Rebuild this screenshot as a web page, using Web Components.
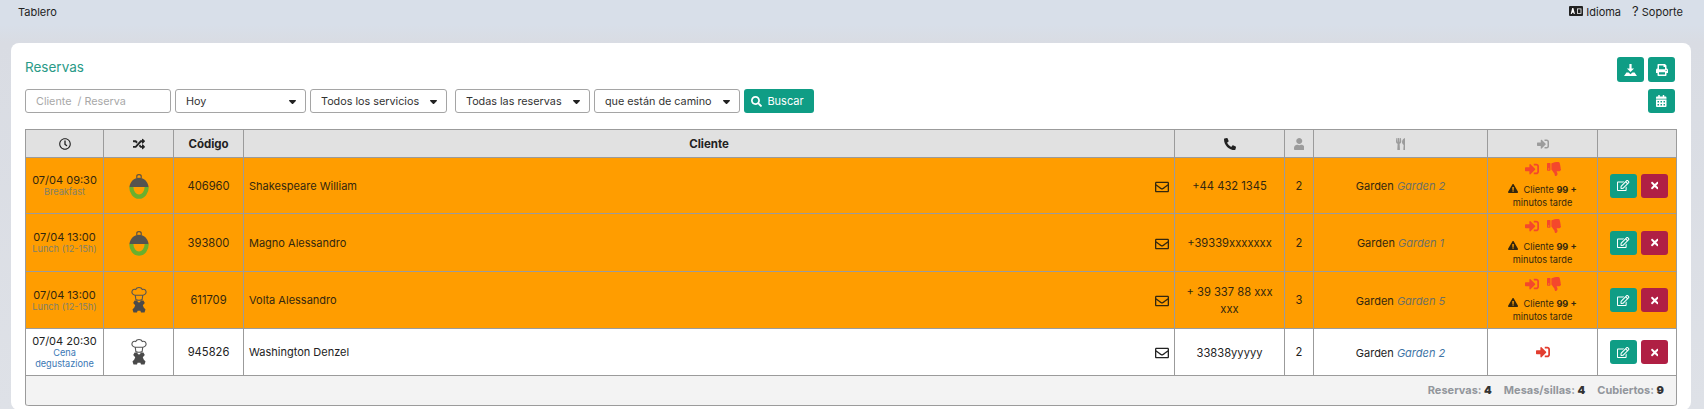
<!DOCTYPE html>
<html lang="es">
<head>
<meta charset="utf-8">
<title>Reservas</title>
<style>
    html, body { margin: 0; height: 409px; overflow: hidden; }
    body {
        background: linear-gradient(#d8dfe9 0, #d8dfe9 25px, #d9dce3 43px, #dee1e7 100%);
        font: 11px Inter, "Liberation Sans", sans-serif;
        color: #222;
    }
</style>
</head>
<body>
<top-bar>
    <span slot="left">Tablero</span>
    <span slot="right"><app-icon name="language"></app-icon>&nbsp;Idioma</span>
    <span slot="right"><span style="font-size:13px;line-height:0">?</span>&nbsp;Soporte</span>
</top-bar>
<res-card heading="Reservas">
    <tool-button slot="actions" icon="download"></tool-button>
    <tool-button slot="actions" icon="print"></tool-button>

    <filter-input slot="filters" style="width:146px" placeholder="Cliente&nbsp; / Reserva"></filter-input>
    <filter-select slot="filters" style="width:131px">Hoy</filter-select>
    <filter-select slot="filters" style="width:137px;margin-right:4px">Todos los servicios</filter-select>
    <filter-select slot="filters" style="width:135px">Todas las reservas</filter-select>
    <filter-select slot="filters" style="width:146px">que están de camino</filter-select>
    <tool-button slot="filters" icon="search" size="11" label="Buscar" style="width:70px;height:24px;padding-right:3px"></tool-button>
    <tool-button slot="calendar" icon="calendar" style="height:24px"></tool-button>

    <res-table reservas="4" mesas="4" cubiertos="9">
        <res-row late height="56" time="07/04 09:30" service="Breakfast" kind="cloche" code="406960" name="Shakespeare William" phone="+44 432 1345" pax="2" table="Garden 2"></res-row>
        <res-row late height="58" time="07/04 13:00" service="Lunch (12-15h)" kind="cloche" code="393800" name="Magno Alessandro" phone="+39339xxxxxxx" pax="2" table="Garden 1"></res-row>
        <res-row late height="57" time="07/04 13:00" service="Lunch (12-15h)" kind="chef" code="611709" name="Volta Alessandro" phone="+ 39 337 88 xxx xxx" pax="3" table="Garden 5"></res-row>
        <res-row height="47" time="07/04 20:30" service="Cena degustazione" kind="chef" code="945826" name="Washington Denzel" phone="33838yyyyy" pax="2" table="Garden 2"></res-row>
    </res-table>
</res-card>

<script>
    const ICONS = {
        print: ['0 0 512 512', 'M448 192V77.250c0-8.490-3.370-16.620-9.370-22.620L393.370 9.370c-6-6-14.140-9.370-22.630-9.370H96C78.330 0 64 14.330 64 32v160c-35.350 0-64 28.650-64 64v112c0 8.840 7.160 16 16 16h48v96c0 17.670 14.330 32 32 32h320c17.670 0 32-14.330 32-32v-96h48c8.840 0 16-7.160 16-16V256c0-35.350-28.650-64-64-64zm-64 256H128v-96h256v96zm0-224H128V64h192v48c0 8.840 7.160 16 16 16h48v96zm48 72c-13.250 0-24-10.750-24-24 0-13.260 10.750-24 24-24s24 10.740 24 24c0 13.250-10.750 24-24 24z'],
        calendar: ['0 0 448 512', 'M0 464c0 26.500 21.500 48 48 48h352c26.500 0 48-21.500 48-48V192H0v272zm320-196c0-6.600 5.400-12 12-12h40c6.600 0 12 5.400 12 12v40c0 6.600-5.400 12-12 12h-40c-6.600 0-12-5.400-12-12v-40zm0 128c0-6.600 5.400-12 12-12h40c6.600 0 12 5.400 12 12v40c0 6.600-5.400 12-12 12h-40c-6.600 0-12-5.400-12-12v-40zM192 268c0-6.600 5.400-12 12-12h40c6.600 0 12 5.400 12 12v40c0 6.600-5.400 12-12 12h-40c-6.600 0-12-5.400-12-12v-40zm0 128c0-6.600 5.400-12 12-12h40c6.600 0 12 5.400 12 12v40c0 6.600-5.400 12-12 12h-40c-6.600 0-12-5.400-12-12v-40zM64 268c0-6.600 5.400-12 12-12h40c6.600 0 12 5.400 12 12v40c0 6.600-5.400 12-12 12H76c-6.600 0-12-5.400-12-12v-40zm0 128c0-6.600 5.400-12 12-12h40c6.600 0 12 5.400 12 12v40c0 6.600-5.400 12-12 12H76c-6.600 0-12-5.400-12-12v-40zM400 64h-48V16c0-8.800-7.200-16-16-16h-32c-8.800 0-16 7.200-16 16v48H160V16c0-8.800-7.200-16-16-16h-32c-8.800 0-16 7.200-16 16v48H48C21.500 64 0 85.500 0 112v48h448v-48c0-26.500-21.500-48-48-48z'],
        search: ['0 0 512 512', 'M505 442.700L405.300 343c-4.500-4.500-10.600-7-17-7H372c27.600-35.300 44-79.700 44-128C416 93.100 322.900 0 208 0S0 93.100 0 208s93.100 208 208 208c48.300 0 92.700-16.400 128-44v16.300c0 6.400 2.500 12.500 7 17l99.700 99.700c9.400 9.400 24.600 9.400 33.900 0l28.300-28.300c9.400-9.400 9.400-24.600.1-34zM208 336c-70.700 0-128-57.200-128-128 0-70.700 57.200-128 128-128 70.700 0 128 57.200 128 128 0 70.700-57.200 128-128 128z'],
        clock: ['0 0 512 512', 'M256 8C119 8 8 119 8 256s111 248 248 248 248-111 248-248S393 8 256 8zm0 448c-110.500 0-200-89.500-200-200S145.500 56 256 56s200 89.500 200 200-89.500 200-200 200zm61.800-104.400l-84.900-61.700c-3.100-2.300-4.900-5.900-4.900-9.700V116c0-6.600 5.400-12 12-12h32c6.600 0 12 5.400 12 12v141.700l66.800 48.600c5.400 3.900 6.500 11.400 2.600 16.800L334.600 349c-3.900 5.300-11.400 6.500-16.800 2.600z'],
        random: ['0 0 512 512', 'M504.971 359.029c9.373 9.373 9.373 24.569 0 33.941l-80 79.984c-15.010 15.010-40.971 4.490-40.971-16.971V416h-58.785a12.004 12.004 0 0 1-8.773-3.812l-70.556-75.596 53.333-57.143L352 336h32v-39.981c0-21.438 25.943-31.998 40.971-16.971l80 79.981zM12 176h84l52.781 56.551 53.333-57.143-70.556-75.596A11.999 11.999 0 0 0 122.785 96H12c-6.627 0-12 5.373-12 12v56c0 6.627 5.373 12 12 12zm372 0v39.984c0 21.460 25.961 31.980 40.971 16.971l80-79.984c9.373-9.373 9.373-24.569 0-33.941l-80-79.981C409.943 24.021 384 34.582 384 56.019V96h-58.785a12.004 12.004 0 0 0-8.773 3.812L96 336H12c-6.627 0-12 5.373-12 12v56c0 6.627 5.373 12 12 12h110.785c3.326 0 6.503-1.381 8.773-3.812L352 176h32z'],
        phone: ['0 0 512 512', 'M497.390 361.800l-112-48a24 24 0 0 0-28 6.900l-49.600 60.600A370.660 370.660 0 0 1 130.600 204.110l60.600-49.600a23.940 23.940 0 0 0 6.900-28l-48-112A24.160 24.160 0 0 0 122.600.610l-104 24A24 24 0 0 0 0 48c0 256.500 207.900 464 464 464a24 24 0 0 0 23.400-18.600l24-104a24.290 24.290 0 0 0-14.010-27.600z'],
        user: ['0 0 448 512', 'M224 256c70.700 0 128-57.300 128-128S294.700 0 224 0 96 57.300 96 128s57.300 128 128 128zm89.600 32h-16.700c-22.200 10.200-46.900 16-72.900 16s-50.600-5.800-72.900-16h-16.700C60.200 288 0 348.200 0 422.400V464c0 26.500 21.500 48 48 48h352c26.500 0 48-21.500 48-48v-41.600c0-74.200-60.200-134.400-134.400-134.400z'],
        utensils: ['0 0 416 512', 'M207.900 15.200c.8 4.700 16.100 94.500 16.100 128.800 0 52.300-27.800 89.600-68.900 104.600L168 486.700c.7 13.700-10.200 25.300-24 25.300H80c-13.700 0-24.700-11.500-24-25.300l12.900-238.100C27.700 233.600 0 196.200 0 144 0 109.600 15.300 19.900 16.100 15.200 19.300-5.100 61.400-5.400 64 16.300v141.200c1.300 3.400 15.100 3.200 16 0 1.400-25.300 7.900-139.200 8-141.800 3.300-20.800 44.700-20.800 47.900 0 .2 2.700 6.600 116.500 8 141.800.9 3.200 14.800 3.400 16 0V16.300c2.600-21.600 44.800-21.400 48-1.100zm119.200 285.700l-15 185.100c-1.200 14 9.900 26 23.900 26h56c13.300 0 24-10.700 24-24V24c0-13.200-10.700-24-24-24-82.500 0-221.400 178.500-64.900 300.900z'],
        signin: ['0 0 512 512', 'M416 448h-84c-6.600 0-12-5.400-12-12v-40c0-6.600 5.400-12 12-12h84c17.700 0 32-14.300 32-32V160c0-17.700-14.300-32-32-32h-84c-6.600 0-12-5.400-12-12V76c0-6.600 5.400-12 12-12h84c53 0 96 43 96 96v192c0 53-43 96-96 96zm-47-201L201 79c-15-15-41-4.500-41 17v96H24c-13.300 0-24 10.700-24 24v96c0 13.300 10.700 24 24 24h136v96c0 21.500 26 32 41 17l168-168c9.300-9.400 9.300-24.600 0-34z'],
        thumbsdown: ['0 0 512 512', 'M0 56v240c0 13.255 10.745 24 24 24h80c13.255 0 24-10.745 24-24V56c0-13.255-10.745-24-24-24H24C10.745 32 0 42.745 0 56zm40 200c0-13.255 10.745-24 24-24s24 10.745 24 24-10.745 24-24 24-24-10.745-24-24zm272 256c-20.183 0-29.485-39.293-33.931-57.795-5.206-21.666-10.589-44.070-25.393-58.902-32.469-32.524-49.503-73.967-89.117-113.111a11.980 11.980 0 0 1-3.558-8.521V59.901c0-6.541 5.243-11.878 11.783-11.998 15.831-.29 36.694-9.079 52.651-16.178C256.189 17.598 295.709.017 343.995 0h2.844c42.777 0 93.363.413 113.774 29.737 8.392 12.057 10.446 27.034 6.148 44.632 16.312 17.053 25.063 48.863 16.382 74.757 17.544 23.432 19.143 56.132 9.308 79.469l.11.11c11.893 11.949 19.523 31.259 19.439 49.197-.156 30.352-26.157 58.098-59.553 58.098H350.723C358.030 364.340 384 388.132 384 430.548 384 504 336 512 312 512z'],
        envelope: ['0 0 512 512', 'M464 64H48C21.490 64 0 85.490 0 112v288c0 26.510 21.490 48 48 48h416c26.510 0 48-21.490 48-48V112c0-26.510-21.490-48-48-48zm0 48v40.805c-22.422 18.259-58.168 46.651-134.587 106.490-16.841 13.247-50.201 45.072-73.413 44.701-23.208.375-56.579-31.459-73.413-44.701C106.180 199.465 70.425 171.067 48 152.805V112h416zM48 400V214.398c22.914 18.251 55.409 43.862 104.938 82.646 21.857 17.205 60.134 55.186 103.062 54.955 42.717.231 80.509-37.199 103.053-54.947 49.528-38.783 82.032-64.401 104.947-82.653V400H48z'],
        edit: ['0 0 576 512', 'M402.300 344.900l32-32c5-5 13.700-1.500 13.700 5.700V464c0 26.500-21.500 48-48 48H48c-26.500 0-48-21.500-48-48V112c0-26.500 21.500-48 48-48h273.500c7.100 0 10.700 8.600 5.700 13.700l-32 32c-1.500 1.500-3.500 2.300-5.700 2.300H48v352h352V350.500c0-2.100.8-4.100 2.300-5.600zm156.600-201.800L296.300 405.700l-90.400 10c-26.200 2.900-48.500-19.200-45.600-45.600l10-90.400L432.900 17.100c22.900-22.900 59.900-22.900 82.700 0l43.200 43.200c22.900 22.900 22.900 60 .1 82.800zM460.100 174L402 115.900 216.200 301.800l-7.300 65.300 65.300-7.300L460.100 174zm64.800-79.700l-43.200-43.200c-4.100-4.100-10.800-4.100-14.800 0L436 82l58.100 58.100 30.900-30.900c4-4.200 4-10.800-.1-14.900z'],
        times: ['0 0 352 512', 'M242.720 256l100.070-100.070c12.280-12.280 12.280-32.190 0-44.480l-22.240-22.240c-12.280-12.280-32.190-12.280-44.480 0L176 189.280 75.930 89.210c-12.280-12.280-32.190-12.280-44.480 0L9.210 111.450c-12.280 12.280-12.280 32.190 0 44.480L109.280 256 9.210 356.070c-12.280 12.280-12.280 32.190 0 44.480l22.240 22.240c12.280 12.280 32.200 12.280 44.480 0L176 322.720l100.070 100.070c12.280 12.280 32.200 12.280 44.480 0l22.240-22.240c12.280-12.280 12.280-32.190 0-44.480L242.720 256z'],
        warning: ['0 0 576 512', 'M569.517 440.013C587.975 472.007 564.806 512 527.940 512H48.054c-36.937 0-59.999-40.055-41.577-71.987L246.423 23.985c18.467-32.009 64.720-31.951 83.154 0l239.940 416.028zM288 354c-25.405 0-46 20.595-46 46s20.595 46 46 46 46-20.595 46-46-20.595-46-46-46zm-43.673-165.346l7.418 136c.347 6.364 5.609 11.346 11.982 11.346h48.546c6.373 0 11.635-4.982 11.982-11.346l7.418-136c.375-6.874-5.098-12.654-11.982-12.654h-63.383c-6.884 0-12.356 5.780-11.981 12.654z'],
    };
    // pictures that are not a single glyph
    const DRAWINGS = {
        download: `<svg viewBox="0 0 14 13" width="13" height="12" fill="currentColor"><path d="M5.800 0h2.400v4.800h2.700L7 8.800 3.100 4.800h2.700z"/><path d="M2.600 9.300h2.300L7 11l2.100-1.700h2.300L14 13H0z"/></svg>`,
        language: `<svg viewBox="0 0 14 10" width="14" height="10"><path fill="#222" d="M1 0h12a1 1 0 0 1 1 1v8a1 1 0 0 1-1 1H1a1 1 0 0 1-1-1V1a1 1 0 0 1 1-1z"/><path fill="#fff" d="M3.200 2h1.200l1.500 6H4.800l-.3-1.300H3.100L2.800 8H1.700zM8 2.500h4.400v5.200H8zm.8.800v3.600h2.800V3.300z"/></svg>`,
        cloche: `<svg viewBox="0 0 20 26" width="20" height="26"><path fill="none" stroke="#5f5140" stroke-width="1.200" d="M7.800 5.500V3.200c0-2 4.400-2 4.400 0v2.300"/><path fill="#55534f" d="M10 4.800c5 0 8.800 3.800 9.600 9.200H.4C1.200 8.600 5 4.800 10 4.800z"/><path fill="none" stroke="#69b02e" stroke-width="4.200" d="M2.300 14a7.700 9.700 0 0 0 15.400 0"/></svg>`,
        chef: `<svg viewBox="0 0 16 28" width="16" height="28"><path fill="none" stroke="#555" stroke-width="1.100" d="M4 9.200C1.600 8.800.6 7 1 5.300 1.500 3.400 3.400 3 4.700 3.500 5.700.9 10.300.9 11.300 3.500c1.300-.5 3.200-.1 3.700 1.800.4 1.700-.6 3.500-3 3.900zM4 9.200h8M4.300 9.500l.6 4.500M11.700 9.500l-.6 4.500M4.800 13.500c1.500 1 4.900 1 6.400 0"/><path fill="#4a4a4a" d="M3.600 14.500h2L8 16.800l2.400-2.300h2l1.400 2.600-2 2.200.9 2.300 1.800 1.900-1 3H10l-.6-1.800H6.600L6 26.500H2.500l-1-3 1.800-1.900.9-2.300-2-2.200z"/></svg>`,
    };

    class AppIcon extends HTMLElement {
        constructor() {
            super();
            const root = this.attachShadow({ mode: 'open' });
            const name = this.getAttribute('name');
            const size = this.getAttribute('size') || 12;
            let art = DRAWINGS[name];
            if (!art) {
                const [box, d] = ICONS[name];
                art = `<svg viewBox="${box}" height="${size}" fill="currentColor"><path d="${d}"/></svg>`;
            }
            root.innerHTML = `<style>:host { display: inline-flex; align-items: center; justify-content: center; line-height: 0; }</style>${art}`;
        }
    }
    customElements.define('app-icon', AppIcon);

    class TopBar extends HTMLElement {
        constructor() {
            super();
            this.attachShadow({ mode: 'open' }).innerHTML = `
                <style>
                    :host { display: flex; justify-content: space-between; align-items: center; height: 25px; padding: 0 21px 1px 18px; box-sizing: border-box; font-size: 11px; color: #222; }
                    .right { display: flex; align-items: center; gap: 11px; }
                </style>
                <div><slot name="left"></slot></div>
                <div class="right"><slot name="right"></slot></div>`;
        }
    }
    customElements.define('top-bar', TopBar);

    class ResCard extends HTMLElement {
        constructor() {
            super();
            this.attachShadow({ mode: 'open' }).innerHTML = `
                <style>
                    :host { display: block; margin: 18px 13px 0 11px; padding: 14px 14px 4px; background: #fff; border-radius: 8px; }
                    .head, .bar { display: flex; justify-content: space-between; padding-right: 2px; }
                    .head { height: 25px; margin-bottom: 7px; }
                    h1 { margin: 0; font: 400 13.500px/20px Inter, "Liberation Sans", sans-serif; color: #2a9a87; }
                    .actions, .filters { display: flex; gap: 4px; }
                    .bar { height: 24px; margin-bottom: 16px; }
                </style>
                <div class="head"><h1>${this.getAttribute('heading')}</h1><div class="actions"><slot name="actions"></slot></div></div>
                <div class="bar"><div class="filters"><slot name="filters"></slot></div><slot name="calendar"></slot></div>
                <slot></slot>`;
        }
    }
    customElements.define('res-card', ResCard);

    class ToolButton extends HTMLElement {
        constructor() {
            super();
            const label = this.getAttribute('label');
            this.attachShadow({ mode: 'open' }).innerHTML = `
                <style>
                    :host { display: inline-flex; align-items: center; justify-content: center; gap: 5px; width: 27px; height: 25px; border-radius: 3px; background: var(--bg, #0f9d85); color: #fff; font-size: 11px; box-sizing: border-box; }
                </style>
                <app-icon name="${this.getAttribute('icon')}" size="${this.getAttribute('size') || 12}"></app-icon>${label ? `<span>${label}</span>` : ''}`;
        }
    }
    customElements.define('tool-button', ToolButton);

    class FilterInput extends HTMLElement {
        constructor() {
            super();
            this.attachShadow({ mode: 'open' }).innerHTML = `
                <style>
                    :host { display: flex; align-items: center; height: 24px; padding: 0 10px; box-sizing: border-box; border: 1px solid #a5a5a5; border-radius: 3px; color: #a8a8a8; font-size: 10.800px; white-space: nowrap; }
                </style>
                <span>${this.getAttribute('placeholder')}</span>`;
        }
    }
    customElements.define('filter-input', FilterInput);

    class FilterSelect extends HTMLElement {
        constructor() {
            super();
            this.attachShadow({ mode: 'open' }).innerHTML = `
                <style>
                    :host { display: flex; align-items: center; justify-content: space-between; height: 24px; padding: 0 9px 0 10px; box-sizing: border-box; border: 1px solid #a5a5a5; border-radius: 3px; color: #333; font-size: 10.800px; white-space: nowrap; }
                    svg { margin-top: 2px; }
                </style>
                <span><slot></slot></span>
                <svg viewBox="0 0 8 5" width="7" height="4.500"><path fill="#222" d="M.6 0h6.800c.5 0 .8.6.4 1L4.400 4.600c-.2.3-.6.3-.8 0L.2 1C-.2.6.1 0 .6 0z"/></svg>`;
        }
    }
    customElements.define('filter-select', FilterSelect);

    const CELL_STYLE = `
        .cell { display: flex; flex-direction: column; align-items: center; justify-content: center; text-align: center; border-right: 1px solid var(--line); min-width: 0; }
        .cell:last-child { border-right: 0; }`;

    class ResTable extends HTMLElement {
        constructor() {
            super();
            const head = ['<app-icon name="clock" size="12"></app-icon>', '<app-icon name="random" size="12"></app-icon>', '<b>Código</b>', '<b>Cliente</b>',
                '<app-icon name="phone" size="12"></app-icon>', '<app-icon class="mute" name="user" size="12"></app-icon>', '<app-icon class="mute" name="utensils" size="12"></app-icon>', '<app-icon class="mute" name="signin" size="12"></app-icon>', ''];
            this.attachShadow({ mode: 'open' }).innerHTML = `
                <style>
                    :host { display: block; --cols: 78px 70px 70px 931px 110px 29px 174px 110px 1fr; --line: #9b9b9b; border: 1px solid #9b9b9b; border-bottom: 0; border-radius: 0 0 3px 3px; font-size: 11.200px; }
                    ${CELL_STYLE}
                    .head { display: grid; grid-template-columns: var(--cols); height: 28px; background: #e1e1e1; border-bottom: 1px solid #9b9b9b; box-sizing: border-box; color: #222; font-size: 11.500px; }
                    .mute { color: #9c9c9c; }
                    .foot { display: flex; justify-content: flex-end; align-items: center; gap: 12px; height: 30px; box-sizing: border-box; padding: 0 12px 1px; background: #f3f3f3; border-bottom: 1px solid #9b9b9b; border-radius: 0 0 3px 3px; font-weight: 700; font-size: 11px; color: #92969c; }
                    .foot b { color: #333; }
                </style>
                <div class="head">${head.map(h => `<div class="cell">${h}</div>`).join('')}</div>
                <slot></slot>
                <div class="foot">
                    <span>Reservas: <b>${this.getAttribute('reservas')}</b></span>
                    <span>Mesas/sillas: <b>${this.getAttribute('mesas')}</b></span>
                    <span>Cubiertos: <b>${this.getAttribute('cubiertos')}</b></span>
                </div>`;
        }
    }
    customElements.define('res-table', ResTable);

    class ResRow extends HTMLElement {
        constructor() {
            super();
            const a = n => this.getAttribute(n);
            const late = this.hasAttribute('late');
            const status = late
                ? `<div class="flags"><app-icon name="signin" size="14"></app-icon><app-icon name="thumbsdown" size="14"></app-icon></div>
                   <div class="warn"><app-icon name="warning" size="9"></app-icon>&nbsp; Cliente <b>99 +</b><br>minutos tarde</div>`
                : `<div class="flags"><app-icon name="signin" size="14"></app-icon></div>`;
            this.attachShadow({ mode: 'open' }).innerHTML = `
                <style>
                    :host { display: grid; grid-template-columns: var(--cols); box-sizing: border-box; border-bottom: 1px solid var(--line); background: #fff; color: #222; --sub: #3b78b5; --place: #3f75a6; --flag: #e23d2f; }
                    :host([late]) { background: #ff9d00; color: #33270f; --sub: #81806a; --place: #6f7063; --flag: #f4482c; }
                    ${CELL_STYLE}
                    .time { line-height: 12px; font-size: 11px; }
                    .time small { display: block; font-size: 9.200px; line-height: 11px; color: var(--sub); padding: 0 3px; }
                    .name { flex-direction: row; justify-content: space-between; padding: 0 5px; box-sizing: border-box; font-size: 11px; }
                    .name app-icon { margin-top: 2px; }
                    .phone { padding: 2px 10px 0; line-height: 17px; box-sizing: border-box; }
                    .table { font-size: 11px; padding-top: 1px; box-sizing: border-box; }
                    .table i { color: var(--place); }
                    .flags { display: flex; gap: 8px; color: var(--flag); }
                    .warn { font-size: 9.200px; line-height: 13px; margin-top: 6.500px; }
                    .warn b { font-weight: 700; }
                    .actions { flex-direction: row; justify-content: flex-start; gap: 4px; padding-left: 12px; }
                    .actions tool-button { width: 27px; height: 24px; }
                    .del { --bg: #b01f44; }
                </style>
                <div class="cell time">${a('time')}<small>${a('service')}</small></div>
                <div class="cell"><app-icon name="${a('kind')}"></app-icon></div>
                <div class="cell">${a('code')}</div>
                <div class="cell name"><span>${a('name')}</span><app-icon name="envelope" size="14"></app-icon></div>
                <div class="cell phone">${a('phone')}</div>
                <div class="cell">${a('pax')}</div>
                <div class="cell table"><span>Garden <i>${a('table')}</i></span></div>
                <div class="cell">${status}</div>
                <div class="cell actions"><tool-button icon="edit" size="11"></tool-button><tool-button class="del" icon="times" size="11"></tool-button></div>`;
            this.style.height = a('height') + 'px';
        }
    }
    customElements.define('res-row', ResRow);
</script>
</body>
</html>
